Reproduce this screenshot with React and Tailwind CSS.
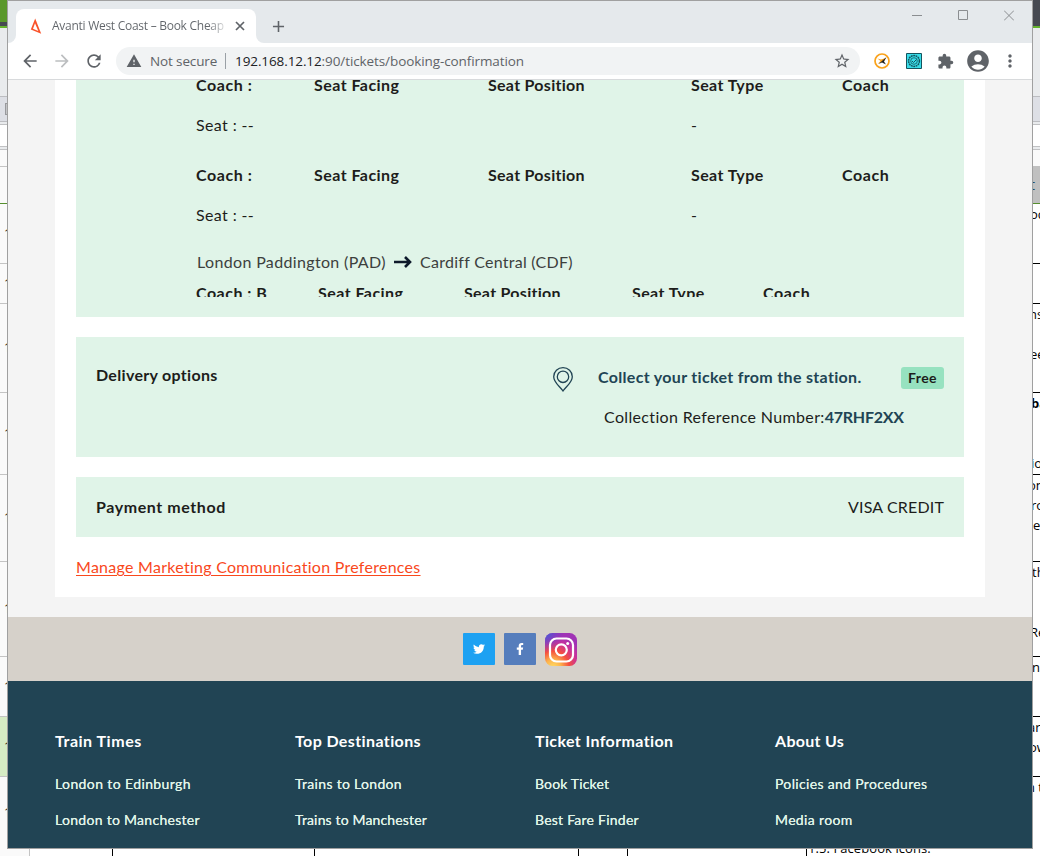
import React from "react";
import { MdStarBorder, MdExtension, MdAccountCircle, MdMoreVert, MdRefresh, MdArrowBack, MdArrowForward, MdWarning, MdAdd } from "react-icons/md";
import { FaTwitter, FaFacebookF } from "react-icons/fa";

const SHEET_ROWS = [
  { h: "h-[60px]", lines: [["oc", "-ml-[3px]"]] },
  { h: "h-[40px]", lines: [] },
  { h: "h-[89px]", lines: [["ns", "-ml-[4px]"], ["", ""], ["ee", "-ml-[3px]"]] },
  { h: "h-[82px]", lines: [["ba", "-ml-[2px] font-bold"], ["", ""], ["", ""], ["io", "-ml-[2px]"]] },
  { h: "h-[87px]", lines: [["on", "-ml-[5px]"], ["ro", "-ml-[2px]"], ["e", "ml-0"]] },
  { h: "h-[95px]", lines: [["th", "-ml-[1px]"], ["", ""], ["", ""], ["Re", "-ml-[3px]"]] },
  { h: "h-[60px]", lines: [["n", "-ml-[1px]"]] },
  { h: "h-[60px]", lines: [["are", "-ml-[5px]"], ["ow", "-ml-[4px]"]], marked: true },
  { h: "h-[73px]", lines: [["n t", "-ml-[6px]"]] },
];

function StripTop({ right }) {
  return (
    <>
      <div className={right ? "h-[26px] shrink-0 bg-[#464951]" : "h-[22px] shrink-0 bg-[#5a982b]"} />
      {!right && <div className="h-1 shrink-0 bg-[#464951]" />}
      <div className="h-[2px] shrink-0 bg-[#65b32e]" />
      <div className="h-[68px] shrink-0 bg-[#e9ebed]" />
      <div className="flex h-[26px] shrink-0 items-center justify-end overflow-hidden border-y border-[#bcbdc1] bg-[#dddfe5]">
        {!right && <div className="h-3 w-[2px] border-y border-l border-[#98999c] bg-[#c4c5c8]" />}
      </div>
      <div className="h-[2px] shrink-0 bg-[#e9ebed]" />
      <div className="h-[23px] shrink-0 border-y border-[#c0c1c3] bg-white" />
      <div className="h-[2px] shrink-0 bg-[#e9ebed]" />
      <div className="h-[17px] shrink-0 border-t border-[#c0c1c3] bg-[#fafafa]" />
      {right ? (
        <div className="flex h-[38px] shrink-0 items-center overflow-hidden border-b border-[#568f2e] bg-[#c0c0c0] text-[14px] text-[#214d68]"><span className="-ml-[3px]">t</span></div>
      ) : (
        <div className="h-[38px] shrink-0 border-t border-b border-t-[#c4c4c4] border-b-[#568f2e] bg-[#fafafa]" />
      )}
    </>
  );
}

function LeftStrip() {
  return (
    <div className="flex w-[7px] shrink-0 flex-col overflow-hidden bg-[#fafafa]">
      <StripTop />
      {SHEET_ROWS.map((r, i) => (
        <div key={i} className={`${r.h} flex shrink-0 items-center overflow-hidden border-b border-[#c4c4c4] pl-[4px] text-[13px] text-[#1f1a08] ${r.marked ? "bg-[#d6ecc4]" : ""}`}>1</div>
      ))}
    </div>
  );
}

function RightStrip() {
  return (
    <div className="flex w-[7px] shrink-0 flex-col overflow-hidden bg-white">
      <StripTop right />
      {SHEET_ROWS.map((r, i) => (
        <div key={i} className={`${r.h} shrink-0 overflow-hidden text-[13px] leading-[20px] whitespace-nowrap text-black ${i < 8 ? "border-b border-black" : ""}`}>
          {r.lines.map(([t, c], j) => (
            <div key={j} className={`h-5 ${c}`}>{t}</div>
          ))}
        </div>
      ))}
    </div>
  );
}

function TitleBar() {
  return (
    <div className="flex h-[42px] shrink-0 items-end bg-[#e5e9ec]">
      <div className="flex h-2 w-2 shrink-0 bg-white"><div className="h-2 w-2 rounded-br-lg bg-[#e5e9ec]" /></div>
      <div className="flex h-[34px] w-[240px] shrink-0 items-center rounded-t-lg bg-white pl-[14px]">
        <svg width="12" height="16" viewBox="0 0 12 16" className="mr-[10px] shrink-0" fill="#f9532b" fillRule="evenodd">
          <path d="M5.200 .6 11.200 15.800 .8 11.600ZM5 5.200 3 10.700 8.300 12.900Z" />
        </svg>
        <div className="w-[172px] shrink-0 overflow-hidden bg-gradient-to-r from-[#5f6368] from-90% to-[#d9dadb] bg-clip-text text-[12px] tracking-[-0.27px] whitespace-nowrap text-transparent">Avanti West Coast – Book Cheap</div>
        <svg width="14" height="14" viewBox="0 0 14 14" className="ml-[9px] shrink-0" stroke="#5f6368" strokeWidth="1.700"><path d="M3 3 11 11M11 3 3 11" /></svg>
      </div>
      <div className="flex h-2 w-2 shrink-0 bg-white"><div className="h-2 w-2 rounded-bl-lg bg-[#e5e9ec]" /></div>
      <div className="flex h-[34px] w-7 shrink-0 items-center justify-center text-[#5f6368]"><MdAdd size={19} /></div>
      <div className="flex h-full grow items-start justify-end gap-9 pt-[9px] pr-[18px] text-[#8b8e91]">
        <svg width="10" height="11" viewBox="0 0 10 11" stroke="currentColor"><path d="M0 5.500H10" /></svg>
        <svg width="10" height="10" viewBox="0 0 10 10" fill="none" stroke="currentColor"><path d="M.5.5H9.500V9.500H.5Z" /></svg>
        <svg width="10" height="11" viewBox="0 0 10 11" stroke="currentColor"><path d="M0 .5 10 10.500M10 .5 0 10.500" /></svg>
      </div>
    </div>
  );
}

function Toolbar() {
  return (
    <div className="flex h-[37px] shrink-0 items-center border-b border-[#d8dadc] bg-white pl-3 text-[#5f6368]">
      <MdArrowBack size={20} />
      <MdArrowForward size={20} className="ml-3 text-[#bcbec0]" />
      <MdRefresh size={20} className="ml-3" />
      <div className="ml-[12px] flex h-7 w-[744px] shrink-0 items-center rounded-full bg-[#f1f3f4] pl-[10px] text-[13.5px]">
        <MdWarning size={16} />
        <span className="ml-[8px] w-[67px] tracking-[-0.13px] whitespace-nowrap">Not secure</span>
        <span className="mx-[8px] h-4 w-px bg-[#9aa0a6]" />
        <span className="ml-px w-[289px] tracking-[-0.094px] whitespace-nowrap text-[#5f6368]"><span className="text-[#202124]">192.168.12.12</span>:90/tickets/booking-confirmation</span>
        <MdStarBorder size={18} className="mr-[9px] ml-auto" />
      </div>
      <svg width="16" height="16" viewBox="0 0 16 16" className="ml-[14px] shrink-0">
        <circle cx="8" cy="8" r="7" fill="#fff" stroke="#faa21b" strokeWidth="1.700" />
        <path d="M3.500 5.500 7 6.500 12 5 10 8 7.500 9 3.500 11 6.500 8Z" fill="#faa21b" />
        <path d="M4.500 11 12.500 4 10 8.500 12 11.500 8 9.500Z" fill="#222" />
      </svg>
      <svg width="16" height="16" viewBox="0 0 16 16" className="ml-4 shrink-0" fill="none" stroke="#14545e">
        <path d="M.5.5H15.500V15.500H.5Z" fill="#38dce8" />
        <circle cx="8" cy="8" r="5.400" strokeWidth="1.500" strokeDasharray="1.800 .6" />
        <circle cx="8" cy="8" r="3.300" strokeWidth=".8" />
        <path d="M6 8 7.500 9.500 10.500 6.500" />
      </svg>
      <MdExtension size={17} className="ml-[15px] shrink-0" />
      <MdAccountCircle size={26} className="ml-[11px] shrink-0" />
      <MdMoreVert size={20} className="ml-[9px] shrink-0" />
    </div>
  );
}

function SeatGroup({ className = "" }) {
  return (
    <div className={className}>
      <div className="grid h-6 grid-cols-[118px_174px_203px_151px_1fr] leading-6 font-bold whitespace-nowrap">
        <span className="tracking-[0.55px]">Coach :</span>
        <span className="tracking-[0.45px]">Seat Facing</span>
        <span className="tracking-[0.28px]">Seat Position</span>
        <span className="tracking-[0.4px]">Seat Type</span>
        <span className="tracking-[0.6px]">Coach</span>
      </div>
      <div className="mt-4 grid h-6 grid-cols-[495px_1fr] leading-6">
        <span className="tracking-[0.38px]">Seat : --</span>
        <span>-</span>
      </div>
    </div>
  );
}

function Booking() {
  return (
    <div className="mx-[47px] flex h-[517px] shrink-0 flex-col bg-white px-[21px] text-[16px] text-[#1d1d1b]">
      <div className="h-[237px] shrink-0 bg-[#e0f4e8] pl-[120px]">
        <div className="h-[217px] overflow-hidden">
          <SeatGroup className="-mt-[7px]" />
          <SeatGroup className="mt-[26px]" />
          <div className="mt-[23px] ml-px flex h-6 items-center leading-6 whitespace-nowrap text-[#3c403d]">
            <span className="w-[189px] tracking-[0.35px]">London Paddington (PAD)</span>
            <svg width="18" height="12" viewBox="0 0 18 12" className="mx-2 shrink-0" fill="none" stroke="#0e1a2b" strokeWidth="2.600"><path d="M0 6H16M11 1 16 6 11 11" /></svg>
            <span className="tracking-[0.27px]">Cardiff Central (CDF)</span>
          </div>
          <div className="mt-[7px] grid h-6 grid-cols-[122px_146px_168px_131px_1fr] leading-6 font-bold whitespace-nowrap">
            <span className="tracking-[0.5px]">Coach : B</span>
            <span className="tracking-[0.45px]">Seat Facing</span>
            <span className="tracking-[0.28px]">Seat Position</span>
            <span className="tracking-[0.4px]">Seat Type</span>
            <span className="tracking-[0.6px]">Coach</span>
          </div>
        </div>
      </div>
      <div className="mt-5 flex h-[120px] shrink-0 justify-between bg-[#e0f4e8] px-5 pt-[26px] leading-6 whitespace-nowrap">
        <span className="font-bold tracking-[0.31px]">Delivery options</span>
        <div className="w-[391px]">
          <div className="mt-[2px] flex h-6 items-center">
            <svg width="20" height="25" viewBox="0 0 20 25" className="mt-[4px] shrink-0" fill="none" stroke="#214454" strokeWidth="1.300">
              <path d="M10 24C7 19.500.7 15.500.7 9.700A9.300 9 0 0 1 19.300 9.700C19.300 15.500 13 19.500 10 24Z" />
              <circle cx="10" cy="9.800" r="5.700" />
            </svg>
            <span className="ml-[25px] font-bold tracking-[0.32px] text-[#214454]">Collect your ticket from the station.</span>
            <span className="mt-[2px] ml-auto flex h-[22px] w-[43px] items-center justify-center rounded-[3px] bg-[#97e2c0] text-[14px] font-bold tracking-[0.4px]">Free</span>
          </div>
          <div className="mt-4 ml-[51px] tracking-[0.35px]">Collection Reference Number:<span className="font-bold tracking-[-0.22px] text-[#214454]">47RHF2XX</span></div>
        </div>
      </div>
      <div className="mt-5 flex h-[60px] shrink-0 items-center justify-between bg-[#e0f4e8] px-5 whitespace-nowrap">
        <span className="font-bold tracking-[0.58px]">Payment method</span>
        <span className="tracking-[0.16px]">VISA CREDIT</span>
      </div>
      <a className="mt-[18px] self-start leading-6 tracking-[0.27px] whitespace-nowrap text-[#f9481c] underline underline-offset-2">Manage Marketing Communication Preferences</a>
    </div>
  );
}

function Social() {
  return (
    <div className="mt-5 flex h-16 shrink-0 items-center justify-center gap-[9px] bg-[#d6d1ca]">
      <div className="flex h-8 w-8 items-center justify-center rounded-[1px] bg-[#1da1f2] text-white"><FaTwitter size={12} /></div>
      <div className="flex h-8 w-8 items-center justify-center rounded-[1px] bg-[#557dbc] pr-px text-white"><FaFacebookF size={12} /></div>
      <svg width="32" height="33" viewBox="0 0 32 33">
        <defs>
          <radialGradient id="warm" cx="0.25" cy="1.05" r="1">
            <stop offset="0" stopColor="#ffdd66" /><stop offset=".25" stopColor="#fdb34c" /><stop offset=".5" stopColor="#f5503e" /><stop offset=".78" stopColor="#c9309b" /><stop offset="1" stopColor="#a033b5" />
          </radialGradient>
          <radialGradient id="cool" cx="0" cy="0" r=".6">
            <stop offset="0" stopColor="#3c62d8" /><stop offset="1" stopColor="#6b3ad0" stopOpacity="0" />
          </radialGradient>
        </defs>
        <rect width="32" height="33" rx="7.500" fill="url(#warm)" />
        <rect width="32" height="33" rx="7.500" fill="url(#cool)" />
        <g fill="none" stroke="#fff" strokeWidth="2.200">
          <rect x="5" y="5.500" width="23" height="23" rx="6.500" />
          <circle cx="16.300" cy="16.800" r="5.500" />
        </g>
        <circle cx="22.700" cy="10.400" r="1.500" fill="#fff" />
      </svg>
    </div>
  );
}

function Footer() {
  const col = "w-60 shrink-0 whitespace-nowrap";
  const head = "h-6 text-[16px] leading-6 font-bold text-white";
  const link = "text-[14px] leading-6 h-6 [text-shadow:0_0_0.5px_#e0f4e8]";
  return (
    <div className="flex grow overflow-hidden bg-[#214454] pt-12 pl-[47px] text-[#e0f4e8]">
      <div className={col}>
        <div className={head}><span className="tracking-[0.52px]">Train Times</span></div>
        <div className={`${link} mt-[19px]`}><span className="tracking-[0.39px]">London to Edinburgh</span></div>
        <div className={`${link} mt-3`}><span className="tracking-[0.29px]">London to Manchester</span></div>
      </div>
      <div className={col}>
        <div className={head}><span className="tracking-[0.39px]">Top Destinations</span></div>
        <div className={`${link} mt-[19px]`}><span className="tracking-[0.31px]">Trains to London</span></div>
        <div className={`${link} mt-3`}><span className="tracking-[0.15px]">Trains to Manchester</span></div>
      </div>
      <div className={col}>
        <div className={head}><span className="tracking-[0.38px]">Ticket Information</span></div>
        <div className={`${link} mt-[19px]`}><span className="tracking-[0.15px]">Book Ticket</span></div>
        <div className={`${link} mt-3`}><span className="tracking-[0.24px]">Best Fare Finder</span></div>
      </div>
      <div className={col}>
        <div className={head}><span className="tracking-[0.3px]">About Us</span></div>
        <div className={`${link} mt-[19px]`}><span className="tracking-[0.33px]">Policies and Procedures</span></div>
        <div className={`${link} mt-3`}><span className="tracking-[0.35px]">Media room</span></div>
      </div>
    </div>
  );
}

export default function App() {
  return (
    <div className="flex h-[856px] w-[1040px] flex-col overflow-hidden bg-white font-['Open_Sans','Noto_Sans',sans-serif]">
      <div className="flex h-[849px] shrink-0">
        <LeftStrip />
        <div className="flex w-[1026px] shrink-0 flex-col overflow-hidden border border-[#a0a0a0]">
          <TitleBar />
          <Toolbar />
          <div className="flex min-h-0 grow flex-col bg-[#f4f4f4] font-['Lato',sans-serif]">
            <Booking />
            <Social />
            <Footer />
          </div>
        </div>
        <RightStrip />
      </div>
      <div className="flex h-[7px] shrink-0 overflow-hidden">
        <div className="w-[30px] shrink-0 border-r border-[#c4c4c4] bg-[#fafafa]" />
        <div className="w-[83px] shrink-0 border-r border-black" />
        <div className="w-[202px] shrink-0 border-r border-black" />
        <div className="w-[264px] shrink-0 border-r border-black" />
        <div className="w-[49px] shrink-0 border-r border-black" />
        <div className="w-[179px] shrink-0 border-r border-black" />
        <div className="-mt-[11px] ml-px text-[13px] leading-5 tracking-[0.08px] whitespace-nowrap text-black">1.5. Facebook icons.</div>
      </div>
    </div>
  );
}
